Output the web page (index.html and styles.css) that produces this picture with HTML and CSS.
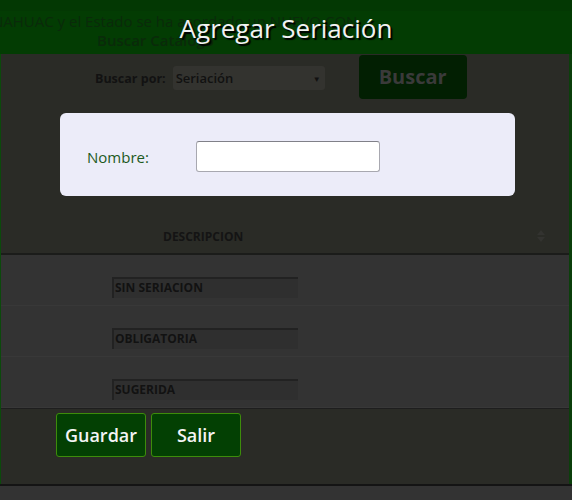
FILE: index.html
```html
<!DOCTYPE html>
<html lang="es">
<head>
<meta charset="utf-8">
<title>Agregar Seriación</title>
<link rel="stylesheet" href="styles.css">
</head>
<body>
<div class="page">
  <header class="top">
    <div class="ticker">NAHUAC y el Estado se ha acordado un NUEVO CON</div>
    <div class="crumb">Buscar Catálogo</div>
  </header>
  <section class="search">
    <label class="search-label">Buscar por:</label>
    <div class="select"><span>Seriación</span><span class="caret">▼</span></div>
    <div class="search-btn">Buscar</div>
  </section>
  <div class="spacer"></div>
  <div class="thead">
    <span class="th">DESCRIPCION</span>
    <svg class="sort" width="8" height="12" viewBox="0 0 8 12"><path d="M4 0L8 5H0z M4 12L0 7H8z" fill="#333330"/></svg>
  </div>
  <div class="row"><div class="cell">SIN SERIACION</div></div>
  <div class="row"><div class="cell">OBLIGATORIA</div></div>
  <div class="row"><div class="cell">SUGERIDA</div></div>
  <footer class="actions">
    <button class="btn">Guardar</button>
    <button class="btn">Salir</button>
  </footer>
  <div class="bottom"></div>
</div>
<div class="dialog">
  <h1 class="title">Agregar Seriación</h1>
  <div class="box">
    <label class="name-label" for="nombre">Nombre:</label>
    <input id="nombre" class="name-input" type="text">
  </div>
</div>
</body>
</html>
```
FILE: styles.css
```css
* { box-sizing: border-box; }
html, body { margin: 0; padding: 0; }
body {
  width: 572px;
  height: 500px;
  overflow: hidden;
  background: #2a2b26;
  font-family: "Open Sans", "Noto Sans", sans-serif;
  position: relative;
}
.page {
  display: flex;
  flex-direction: column;
  border-left: 1px solid #0b4a0b;
  border-right: 3px solid #0b3f0b;
  height: 500px;
}
.top {
  height: 54px;
  background: #033c03;
  border-top: 11px solid #033803;
  margin-left: -1px;
  margin-right: -3px;
  overflow: hidden;
  position: relative;
}
.ticker {
  font-size: 15px;
  line-height: 20px;
  color: #0a2a0a;
  white-space: nowrap;
  margin-left: -8px;
}
.crumb {
  font-size: 15px;
  line-height: 18px;
  color: #0a2a0a;
  font-weight: 600;
  margin-left: 97px;
}
.search {
  height: 52px;
  display: flex;
  align-items: center;
  padding-left: 94px;
}
.search-label {
  font-size: 12.5px;
  font-weight: 700;
  color: #121212;
  margin-right: 7px;
  margin-top: -4px;
}
.select {
  width: 152px;
  height: 24px;
  background: #33332f;
  border-radius: 3px;
  display: flex;
  align-items: center;
  justify-content: space-between;
  padding: 0 4px 0 3px;
  font-size: 13px;
  font-weight: 600;
  color: #111;
  margin-top: -4px;
}
.caret { font-size: 8px; color: #111; }
.search-btn {
  width: 108px;
  height: 44px;
  margin-left: 34px;
  margin-top: -7px;
  background: #021f02;
  border-radius: 4px;
  display: flex;
  align-items: center;
  justify-content: center;
  font-size: 20px;
  font-weight: 700;
  color: #3a3a3a;
}
.spacer { height: 113px; }
.thead {
  height: 36px;
  border-bottom: 2px solid #1b1c1a;
  display: flex;
  align-items: center;
  padding-left: 162px;
  padding-right: 24px;
  justify-content: space-between;
}
.th { font-size: 12px; font-weight: 700; color: #141414; }
.row {
  height: 51px;
  background: #333333;
  border-bottom: 1px solid #383838;
  padding-top: 22px;
  padding-left: 111px;
}
.cell {
  width: 186px;
  height: 21px;
  background: #2f2f2f;
  border-top: 2px solid #222;
  border-left: 2px solid #222;
  font-size: 12px;
  font-weight: 700;
  color: #121212;
  line-height: 18px;
  padding-left: 1px;
}
.actions {
  height: 76px;
  border-top: 1px solid #1e1e1e;
  display: flex;
  gap: 5px;
  padding-left: 55px;
  padding-top: 4px;
  align-items: flex-start;
}
.btn {
  width: 90px;
  height: 44px;
  background: #034003;
  border: 1px solid #3d8c0b;
  border-radius: 3px;
  color: #f4f4f4;
  font-family: "Open Sans", "Noto Sans", sans-serif;
  font-size: 18px;
  font-weight: 600;
  padding: 0;
}
.bottom {
  flex: 1;
  background: #333333;
  border-top: 2px solid #141414;
  margin-left: -1px;
  margin-right: -3px;
}
.dialog {
  position: absolute;
  left: 0;
  top: 0;
  width: 572px;
}
.title {
  margin: 0;
  text-align: center;
  font-size: 26px;
  font-weight: 400;
  line-height: 56px;
  color: #f2f2f2;
  text-shadow: 2px 2px 1px #000;
}
.box {
  position: absolute;
  left: 60px;
  top: 113px;
  width: 455px;
  height: 83px;
  background: #ececf9;
  border-radius: 6px;
  display: flex;
  align-items: center;
  padding-left: 27px;
}
.name-label {
  font-size: 15px;
  color: #1d5a1d;
  width: 109px;
  margin-top: 4px;
}
.name-input {
  width: 184px;
  height: 31px;
  border: 1px solid #a8a8b0;
  border-top-color: #808088;
  border-radius: 3px;
  background: #fff;
  margin-top: 4px;
}
```
